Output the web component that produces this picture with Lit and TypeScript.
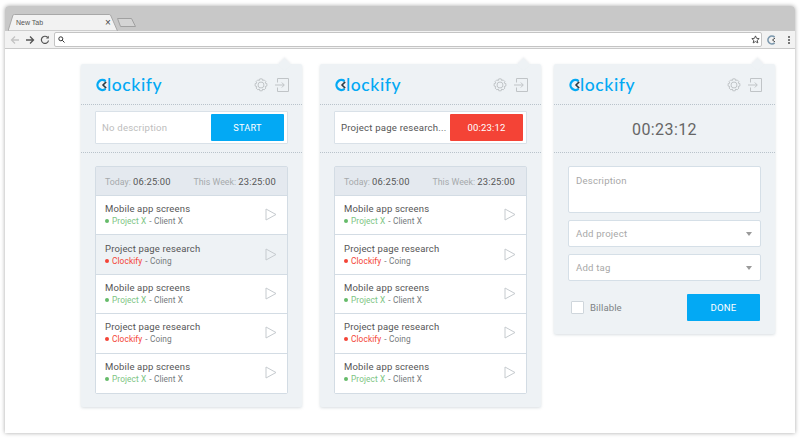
import { LitElement, html, css, svg } from "lit";
import { customElement, property } from "lit/decorators.js";

const logoMark = svg`<svg class="mark" width="12" height="14" viewBox="0 0 12 14" fill="none">
  <path d="M9.600 3.100A5 5 0 1 0 9.600 10.900" stroke="#03a9f4" stroke-width="2.300"/>
  <path d="M10.200 3.900L7 7l3.200 3.100" stroke="#2b3a45" stroke-width="1.500"/>
</svg>`;

const gear = svg`<svg width="14" height="14" viewBox="0 0 16 16" fill="none" stroke="#c0c4c7" stroke-width="1.100">
  <path d="M6.600 1h2.800l.5 2 1.700-.9 2 2-.9 1.700 2 .6v2.800l-2 .6.9 1.700-2 2-1.700-.9-.5 2H6.600l-.5-2-1.700.9-2-2 .9-1.700-2-.6V6.400l2-.6-.9-1.700 2-2 1.700.9z" stroke-linejoin="round"/>
  <circle cx="8" cy="8" r="3.400"/>
</svg>`;

const exit = svg`<svg width="14" height="14" viewBox="0 0 14 14" fill="none" stroke="#c0c4c7" stroke-width="1">
  <path d="M2.500 4.500V.5h11v13h-11V9.500"/>
  <path d="M0 7h9M6.800 4.500L9.300 7 6.800 9.500"/>
</svg>`;

const play = svg`<svg width="12" height="13" viewBox="0 0 12 13" fill="none" stroke="#c6cbcf" stroke-width="1">
  <path d="M1 1l10 5.500L1 12z" stroke-linejoin="miter"/>
</svg>`;

@customElement("panel-head")
class PanelHead extends LitElement {
  static styles = css`
    :host { display: flex; align-items: center; justify-content: space-between; height: 41px; box-sizing: border-box; padding: 1px 13px 0 15px; border-bottom: 1px dotted #b9c3cb; }
    .logo { display: flex; align-items: center; color: #03a9f4; font: 500 17.500px/20px "Lato", sans-serif; letter-spacing: 0.600px; }
    .mark { margin-right: -1px; }
    .icons { display: flex; align-items: center; gap: 7px; }
  `;
  render() {
    return html`<div class="logo">${logoMark}<span>lockify</span></div><div class="icons">${gear}${exit}</div>`;
  }
}

type Entry = { title: string; project: string; client: string; red: boolean; alt?: boolean };

@customElement("entry-list")
class EntryList extends LitElement {
  @property({ type: Boolean }) shaded = false;
  static styles = css`
    :host { display: block; margin: 13px 14px 13px; border: 1px solid #d3dce4; border-radius: 2px; background: #fff; }
    .sum { display: flex; justify-content: space-between; align-items: center; height: 29px; box-sizing: border-box; padding: 0 11px 0 9px; background: #e4e9ef; border-bottom: 1px solid #d3dce4; font-size: 8.800px; color: #a6a9ac; }
    .sum b { font-weight: 400; font-size: 9.400px; color: #555; letter-spacing: .2px; }
    .row { display: flex; align-items: center; justify-content: space-between; height: 39.400px; box-sizing: border-box; padding: 0 10px 1px 9px; border-bottom: 1px solid #d3dce4; background: #fff; }
    .row:last-child { border-bottom: 0; }
    .row.alt { background: #eef2f5; }
    .t { font-size: 9.500px; line-height: 13px; color: #555; letter-spacing: .15px; }
    .s { display: flex; align-items: center; font-size: 8.300px; line-height: 12px; color: #767a7d; letter-spacing: .1px; }
    .dot { width: 4px; height: 4px; border-radius: 50%; margin-right: 3px; }
    .green .dot { background: #66bb6a; }
    .green .p { color: #7cc47f; }
    .red .dot { background: #f44336; }
    .red .p { color: #f44336; }
    .p { margin-right: 3px; }
    .pl { display: flex; }
  `;
  render() {
    const m: Entry = { title: "Mobile app screens", project: "Project X", client: "Client X", red: false };
    const r: Entry = { title: "Project page research", project: "Clockify", client: "Coing", red: true };
    const rows = [m, { ...r, alt: this.shaded }, m, r, m];
    return html`
      <div class="sum"><span>Today: <b>06:25:00</b></span><span>This Week: <b>23:25:00</b></span></div>
      ${rows.map((e) => html`<div class="row ${e.alt ? "alt" : ""}">
        <div>
          <div class="t">${e.title}</div>
          <div class="s ${e.red ? "red" : "green"}"><span class="dot"></span><span class="p">${e.project}</span>- ${e.client}</div>
        </div>
        <div class="pl">${play}</div>
      </div>`)}`;
  }
}

@customElement("app-root")
class AppRoot extends LitElement {
  static styles = css`
    :host { display: block; width: 800px; height: 440px; box-sizing: border-box; padding: 6px 5px 7px; background: #fff; font-family: Roboto, sans-serif; overflow: hidden; }
    .win { height: 100%; display: flex; flex-direction: column; background: #fff; border-radius: 4px 4px 0 0; box-shadow: 0 0 4px rgba(0,0,0,.35); }
    .tabs { height: 25px; background: #c8c8c8; border-radius: 4px 4px 0 0; display: flex; align-items: flex-end; padding-left: 3px; flex: none; }
    .tab { position: relative; width: 110px; height: 17px; display: flex; align-items: center; }
    .tab svg { display: block; }
    .tab-shape { width: 110px; height: 17px; }
    .tab-label { position: absolute; left: 8px; top: 3px; font: 7px/11px "Liberation Sans", sans-serif; color: #555; }
    .tab-x { position: absolute; left: 97px; top: 3px; font: 10px/11px "Liberation Sans", sans-serif; color: #444; }
    .newtab { margin: 0 0 4px -1px; }
    .bar { height: 18px; flex: none; box-sizing: border-box; background: #f2f2f2; border-bottom: 1px solid #c9c9c9; display: flex; align-items: center; padding: 0 5px 0 5px; gap: 5px; }
    .nav { display: flex; align-items: center; gap: 5px; }
    .url { flex: 1; height: 15px; box-sizing: border-box; background: #fff; border: 1px solid #c4c4c4; border-radius: 2px; display: flex; align-items: center; justify-content: space-between; padding: 0 1px 0 3px; margin-left: -1px; }
    .ext { display: flex; align-items: center; gap: 11px; }
    .dots { display: flex; flex-direction: column; gap: 1px; }
    .dots i { width: 2px; height: 2px; background: #777; }
    .content { flex: 1; display: flex; align-items: flex-start; padding: 15px 0 0 76px; }
    .panel { position: relative; width: 221px; flex: none; background: #eef2f5; border-radius: 2px; box-shadow: 0 1px 3px rgba(120,135,150,.28); }
    .panel::before { content: ""; position: absolute; right: 13px; top: -4px; width: 9px; height: 9px; background: #eef2f5; transform: rotate(45deg); box-shadow: -1px -1px 2px rgba(120,135,150,.12); }
    .p2 { margin-left: 18px; }
    .p3 { margin-left: 13px; }
    .entry { margin: 6px 14px 8px; height: 33px; box-sizing: border-box; padding: 1px; background: #fff; border: 1px solid #d9e1e8; display: flex; align-items: center; justify-content: space-between; border-radius: 1px; }
    .entry span { font-size: 9.600px; letter-spacing: .2px; padding-left: 5px; color: #bdbdbd; white-space: nowrap; }
    .entry span.dark { color: #555; }
    .entry button { flex: none; width: 73px; height: 27px; margin-right: 2px; border: 0; border-radius: 1px; color: #fff; font: 400 9.200px Roboto, sans-serif; letter-spacing: .2px; padding: 0; }
    .blue { background: #03a9f4; }
    .entry button.redb { background: #f44336; font-size: 9.500px; }
    .sep { border-bottom: 1px dotted #b9c3cb; }
    .clock { height: 48px; display: flex; align-items: center; justify-content: center; font-size: 16px; letter-spacing: .4px; color: #666; border-bottom: 1px dotted #b9c3cb; padding-top: 1px; box-sizing: border-box; }
    .form { padding: 13px 14px 13px; display: flex; flex-direction: column; gap: 7px; }
    .inp { background: #fff; border: 1px solid #d5dfe7; border-radius: 2px; box-sizing: border-box; height: 27px; padding: 0 7px; display: flex; align-items: center; justify-content: space-between; font-size: 9.600px; color: #a8a8a8; letter-spacing: .2px; }
    .area { height: 47px; align-items: flex-start; padding-top: 8px; line-height: 12px; }
    .car { width: 0; height: 0; border: 3px solid transparent; border-top: 4px solid #9a9a9a; border-bottom: 0; margin-right: 1px; }
    .foot { display: flex; align-items: center; justify-content: space-between; margin-top: 6px; padding: 0 1px 0 3px; }
    .bill { display: flex; align-items: center; gap: 6px; font-size: 9.600px; color: #7d8285; letter-spacing: .1px; }
    .cb { width: 11px; height: 11px; background: #fff; border: 1px solid #cfd6dc; border-radius: 1px; }
    .done { width: 73px; height: 27px; border: 0; border-radius: 1px; background: #03a9f4; color: #fff; font: 400 9.600px Roboto, sans-serif; padding: 0; letter-spacing: .2px; }
  `;
  render() {
    return html`<div class="win">
      <div class="tabs">
        <div class="tab">
          <svg class="tab-shape" viewBox="0 0 110 17"><path d="M0 17 L5 1 Q5.500 .5 6.500 .5H101Q102 .5 102.500 1L109.500 17Z" fill="#f2f2f2" stroke="#a8a8a8" stroke-width="1"/></svg>
          <span class="tab-label">New Tab</span><span class="tab-x">×</span>
        </div>
        <svg class="newtab" width="19" height="9" viewBox="0 0 19 9"><path d="M.5 .5H14.500L18.500 8.500H3.500Z" fill="#d4d4d4" stroke="#a0a0a0"/></svg>
      </div>
      <div class="bar">
        <div class="nav">
          <svg width="10" height="10" viewBox="0 0 10 10" fill="none" stroke="#c4c4c4" stroke-width="1.300"><path d="M9 5H1.500M5 1.500L1.500 5 5 8.500"/></svg>
          <svg width="10" height="10" viewBox="0 0 10 10" fill="none" stroke="#555" stroke-width="1.300"><path d="M1 5h7.500M5 1.500L8.500 5 5 8.500"/></svg>
          <svg width="10" height="10" viewBox="0 0 10 10" fill="none" stroke="#555" stroke-width="1.200"><path d="M8.500 5.500A3.600 3.600 0 1 1 7.500 2.300"/><path d="M8.800 .8V3.500H6.100" fill="#555" stroke="none"/></svg>
        </div>
        <div class="url">
          <svg width="7" height="7" viewBox="0 0 7 7" fill="none" stroke="#333" stroke-width="1"><circle cx="2.800" cy="2.800" r="2"/><path d="M4.300 4.300L6.500 6.500"/></svg>
          <svg width="9" height="9" viewBox="0 0 10 10" fill="none" stroke="#444" stroke-width="1"><path d="M5 1l1.200 2.700 2.900.3-2.200 1.900.7 2.900L5 7.300 2.400 8.800l.7-2.900L.9 4l2.900-.3z"/></svg>
        </div>
        <div class="ext">
          <svg width="10" height="10" viewBox="0 0 10 10" fill="none"><path d="M7.600 2.200A3.900 3.900 0 1 0 7.600 7.800" stroke="#7c98ad" stroke-width="1.700"/><path d="M8 3L5.500 5 8 7" stroke="#444" stroke-width="1"/></svg>
          <div class="dots"><i></i><i></i><i></i></div>
        </div>
      </div>
      <div class="content">
        <section class="panel">
          <panel-head></panel-head>
          <div class="entry"><span>No description</span><button class="blue">START</button></div>
          <div class="sep"></div>
          <entry-list shaded></entry-list>
        </section>
        <section class="panel p2">
          <panel-head></panel-head>
          <div class="entry"><span class="dark">Project page research...</span><button class="redb">00:23:12</button></div>
          <div class="sep"></div>
          <entry-list></entry-list>
        </section>
        <section class="panel p3">
          <panel-head></panel-head>
          <div class="clock">00:23:12</div>
          <div class="form">
            <div class="inp area">Description</div>
            <div class="inp">Add project<i class="car"></i></div>
            <div class="inp">Add tag<i class="car"></i></div>
            <div class="foot">
              <div class="bill"><i class="cb"></i>Billable</div>
              <button class="done">DONE</button>
            </div>
          </div>
        </section>
      </div>
    </div>`;
  }
}
